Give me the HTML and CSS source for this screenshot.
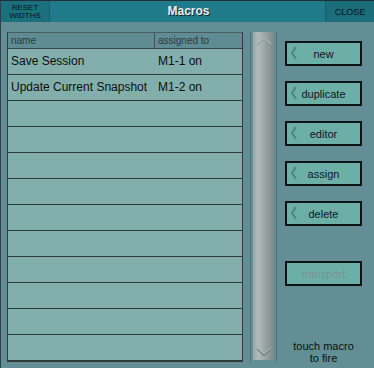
FILE: index.html
```html
<!DOCTYPE html>
<html lang="en">
<head>
    <meta charset="UTF-8">
    <title>Macros</title>
    <link rel="stylesheet" href="styles.css">
</head>
<body>
    <div class="window">
        <div class="titlebar">
            <button class="reset-btn">RESET<br>WIDTHS</button>
            <div class="title">Macros</div>
            <button class="close-btn">CLOSE</button>
        </div>
        <div class="main">
            <div class="macro-table">
                <div class="table-head">
                    <div class="col-name">name</div>
                    <div class="col-assigned">assigned to</div>
                </div>
                <div class="table-row">
                    <div class="col-name">Save Session</div>
                    <div class="col-assigned">M1-1 on</div>
                </div>
                <div class="table-row">
                    <div class="col-name">Update Current Snapshot</div>
                    <div class="col-assigned">M1-2 on</div>
                </div>
                <div class="table-row"></div>
                <div class="table-row"></div>
                <div class="table-row"></div>
                <div class="table-row"></div>
                <div class="table-row"></div>
                <div class="table-row"></div>
                <div class="table-row"></div>
                <div class="table-row"></div>
                <div class="table-row"></div>
                <div class="table-row"></div>
            </div>

            <div class="scroll-track">
                <div class="scroll-thumb">
                    <svg class="arrow-up" width="20" height="10" viewBox="0 0 20 10">
                        <polyline points="3,8 10,2 17,8" fill="none" stroke="#b4bfbf" stroke-width="1.5"/>
                        <polyline points="3,9 10,3 17,9" fill="none" stroke="#7e8c8c" stroke-width="1"/>
                    </svg>
                    <svg class="arrow-down" width="20" height="10" viewBox="0 0 20 10">
                        <polyline points="3,2 10,8 17,2" fill="none" stroke="#6a7878" stroke-width="1.5"/>
                        <polyline points="3,1 10,7 17,1" fill="none" stroke="#b4bfbf" stroke-width="1"/>
                    </svg>
                </div>
            </div>

            <div class="actions">
                <button class="action-btn">
                    <svg class="chev" width="8" height="14" viewBox="0 0 8 14"><polyline points="6,1 2,7 6,13" fill="none" stroke="#4a827d" stroke-width="1.8"/></svg>
                    <span>new</span>
                </button>
                <button class="action-btn">
                    <svg class="chev" width="8" height="14" viewBox="0 0 8 14"><polyline points="6,1 2,7 6,13" fill="none" stroke="#4a827d" stroke-width="1.8"/></svg>
                    <span>duplicate</span>
                </button>
                <button class="action-btn">
                    <svg class="chev" width="8" height="14" viewBox="0 0 8 14"><polyline points="6,1 2,7 6,13" fill="none" stroke="#4a827d" stroke-width="1.8"/></svg>
                    <span>editor</span>
                </button>
                <button class="action-btn">
                    <svg class="chev" width="8" height="14" viewBox="0 0 8 14"><polyline points="6,1 2,7 6,13" fill="none" stroke="#4a827d" stroke-width="1.8"/></svg>
                    <span>assign</span>
                </button>
                <button class="action-btn">
                    <svg class="chev" width="8" height="14" viewBox="0 0 8 14"><polyline points="6,1 2,7 6,13" fill="none" stroke="#4a827d" stroke-width="1.8"/></svg>
                    <span>delete</span>
                </button>
                <button class="action-btn disabled"><span>transport</span></button>
                <p class="hint">touch macro<br>to fire</p>
            </div>
        </div>
    </div>
</body>
</html>
```

FILE: styles.css
```css
body {
    margin: 0;
    padding: 0;
    font-family: "Liberation Sans", Arial, sans-serif;
    background: #638e96;
}
.window {
    width: 373px;
    height: 367px;
    border-top: 1px solid #1c3036;
    border-left: 1px solid #2a4248;
    background: #638e96;
    overflow: hidden;
}
.titlebar {
    display: flex;
    height: 21px;
    background: #1f7b89;
}
.reset-btn {
    width: 49px;
    height: 21px;
    margin: 0;
    padding: 0;
    border: none;
    border-right: 1px solid #17606c;
    background: #1c707e;
    color: #06121a;
    font-family: "Liberation Sans", Arial, sans-serif;
    font-size: 8px;
    line-height: 8px;
}
.title {
    flex: 1;
    text-align: center;
    color: #eceeee;
    font-weight: bold;
    font-size: 12px;
    line-height: 21px;
    text-shadow: 1px 1px 0 #0a2a30;
    padding-left: 2px;
}
.close-btn {
    width: 49px;
    height: 21px;
    margin: 0;
    padding: 0;
    border: none;
    border-left: 1px solid #17606c;
    background: #1b6d7a;
    color: #06141e;
    font-family: "Liberation Sans", Arial, sans-serif;
    font-size: 9px;
}
.main {
    display: flex;
    align-items: flex-start;
    padding: 10px 0 0 6px;
}
.macro-table {
    width: 234px;
    border: 1px solid #2f3a3b;
    border-top-color: #4a5c5e;
    border-bottom-width: 2px;
}
.table-head {
    display: flex;
    height: 15px;
    background: #5f8b93;
    border-bottom: 1px solid #354647;
    color: #2c3b3c;
    font-size: 10px;
    line-height: 15px;
}
.table-head .col-name {
    width: 143px;
    padding-left: 3px;
    border-right: 1px solid #3f5255;
}
.table-head .col-assigned {
    padding-left: 3px;
}
.table-row {
    display: flex;
    height: 25px;
    background: #82aeab;
    border-bottom: 1px solid #2f3a3b;
    color: #0e0e0e;
    font-size: 12px;
    line-height: 25px;
}
.table-row:last-child {
    border-bottom: none;
}
.table-row .col-name {
    width: 147px;
    padding-left: 3px;
    white-space: nowrap;
}
.scroll-track {
    margin-left: 7px;
    width: 21px;
    height: 330px;
    border-left: 1px solid #4b7279;
    border-right: 1px solid #4b7279;
    padding: 0 2px;
}
.scroll-thumb {
    display: flex;
    flex-direction: column;
    justify-content: space-between;
    align-items: center;
    height: 328px;
    background: linear-gradient(to right, #9aa7a7 0%, #b0baba 25%, #9ba6a6 55%, #7c8a8a 100%);
}
.arrow-up {
    margin-top: 4px;
}
.arrow-down {
    margin-bottom: 3px;
}
.actions {
    display: flex;
    flex-direction: column;
    align-items: center;
    margin-left: 8px;
    padding-top: 9px;
}
.action-btn {
    position: relative;
    width: 77px;
    height: 25px;
    margin: 0 0 15px 0;
    padding: 0;
    border: 2px solid #0d1414;
    background: #6bafa7;
    color: #0e1626;
    font-family: "Liberation Sans", Arial, sans-serif;
    font-size: 11px;
}
.action-btn .chev {
    position: absolute;
    left: 3px;
    top: 3px;
}
.action-btn.disabled {
    color: #7c9292;
    margin-top: 20px;
}
.hint {
    margin: 39px 0 0 0;
    text-align: center;
    font-size: 11px;
    line-height: 12px;
    color: #0e0e0e;
}
```
